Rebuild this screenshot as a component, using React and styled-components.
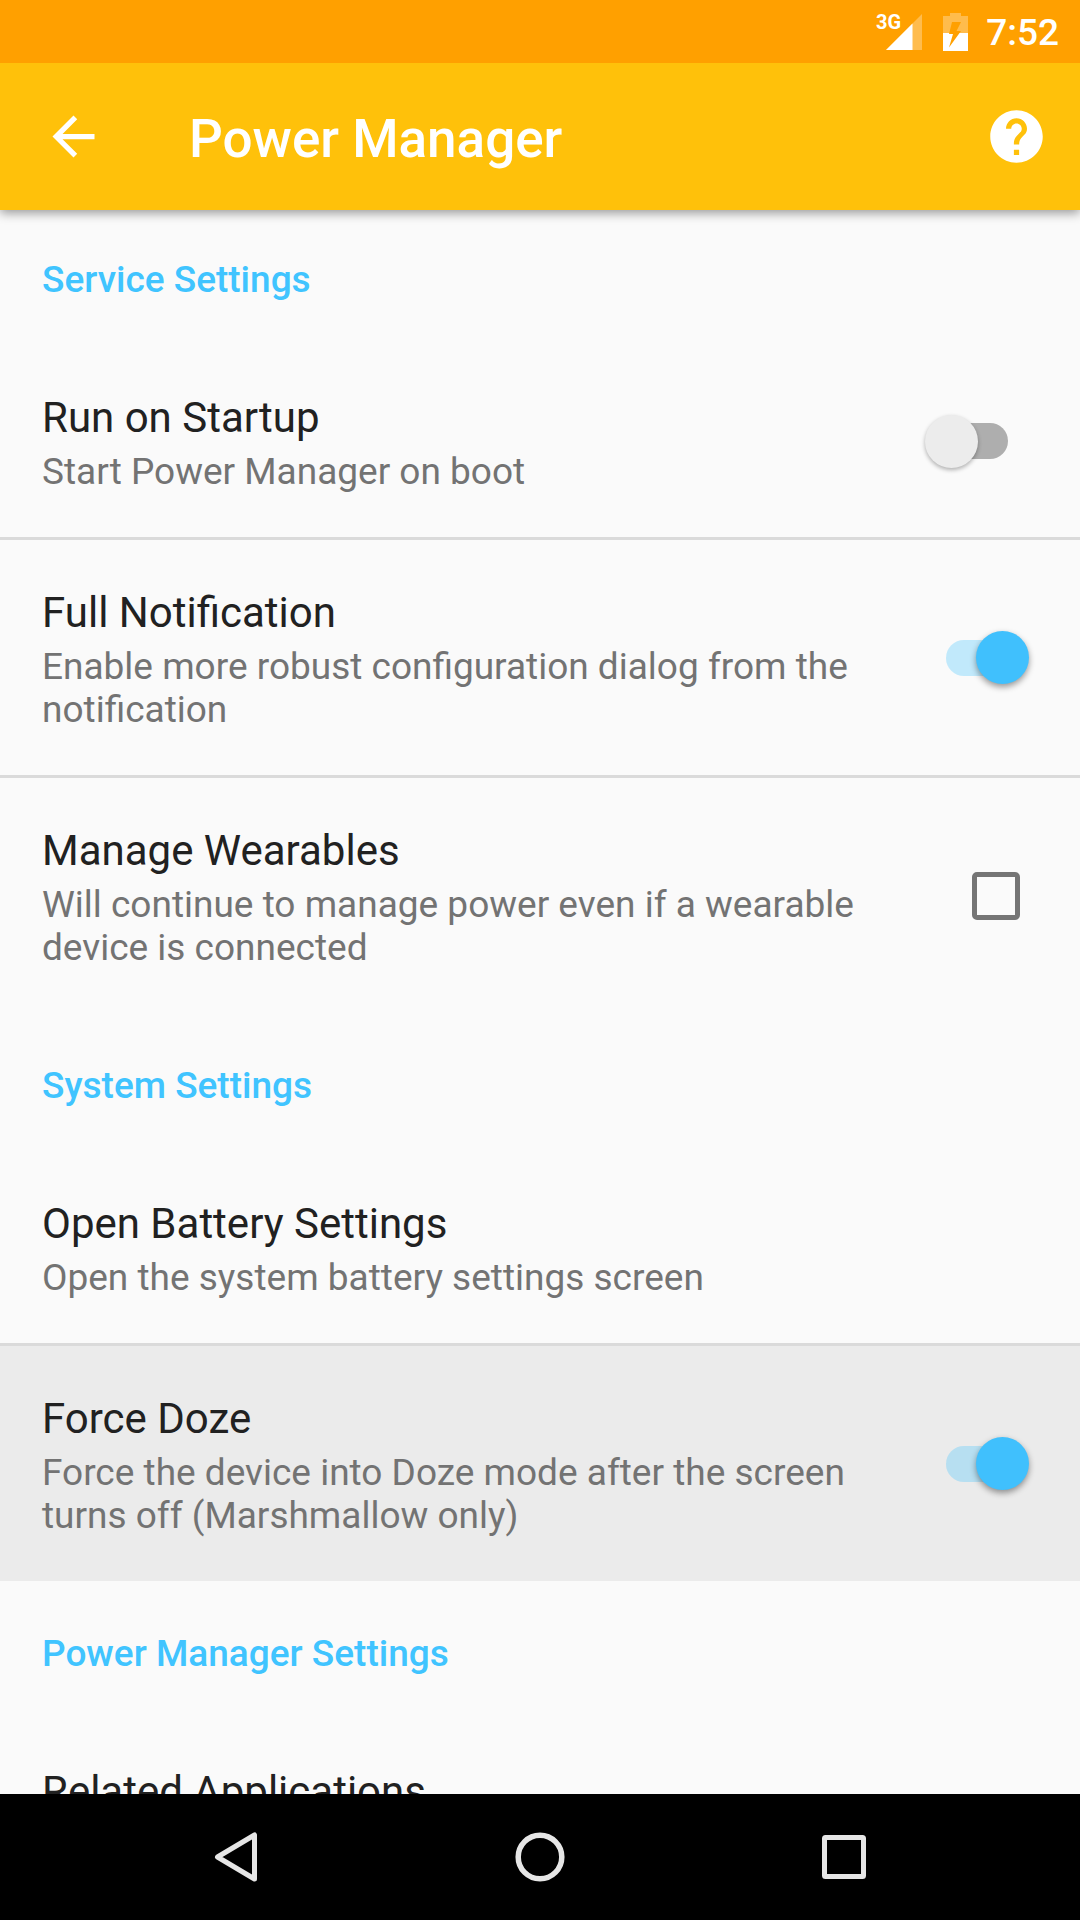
import React, { useState } from "react";
import styled, { createGlobalStyle } from "styled-components";

const GlobalStyle = createGlobalStyle`
  *, *::before, *::after { box-sizing: border-box; }
  body {
    margin: 0;
    background: #fafafa;
    font-family: Roboto, "Noto Sans", sans-serif;
  }
  button { font: inherit; color: inherit; border: 0; background: none; padding: 0; cursor: pointer; }
  svg { display: block; }
`;

const Screen = styled.div`
  display: flex;
  flex-direction: column;
  height: 100vh;
  overflow: hidden;
`;

const StatusBar = styled.div`
  display: flex;
  align-items: center;
  justify-content: flex-end;
  flex: none;
  height: 63px;
  padding: 0 21px;
  background: #ffa000;
  color: #fff;
  z-index: 2;
`;

const NetworkType = styled.span`
  margin-right: -16px;
  font-size: 20px;
  font-weight: 700;
  line-height: 18px;
`;

const Signal = styled.div`
  display: flex;
  height: 38px;
  margin-right: 20px;
`;

const Clock = styled.time`
  margin-left: 18px;
  font-size: 37px;
  font-weight: 500;
  line-height: 43px;
  padding-top: 2px;
`;

const Toolbar = styled.header`
  display: flex;
  align-items: center;
  flex: none;
  height: 147px;
  padding: 0 32px 0 42px;
  background: #ffc10a;
  color: #fff;
  box-shadow: 0 3px 10px rgba(0, 0, 0, 0.4);
  z-index: 1;
`;

const IconButton = styled.button`
  display: block;
  width: 63px;
  height: 63px;
`;

const AppTitle = styled.h1`
  flex: 1;
  margin: 0;
  padding: 4px 0 0 84px;
  font-size: 53px;
  font-weight: 500;
  line-height: 62px;
`;

const Content = styled.main`
  display: flex;
  flex-direction: column;
  flex: 1;
  min-height: 0;
  gap: 3px;
  overflow: hidden;
`;

const Section = styled.section`
  flex: none;
`;

const SectionTitle = styled.h2`
  margin: 0;
  padding: 48px 42px 44px;
  color: #40c4ff;
  font-size: 37px;
  font-weight: 500;
  line-height: 43px;
`;

const List = styled.ul`
  margin: 0;
  padding: 0;
  list-style: none;
`;

const Item = styled.li`
  & + & { border-top: 3px solid #dadada; }
`;

const Row = styled.label`
  display: flex;
  align-items: center;
  width: 100%;
  gap: 42px;
  padding: 48px 51px 44px 42px;
  background: ${(p) => (p.$pressed ? "#ebebeb" : "transparent")};
  text-align: left;
  cursor: pointer;
`;

const RowText = styled.span`
  display: flex;
  flex-direction: column;
  flex: 1;
  gap: 8px;
`;

const RowTitle = styled.span`
  color: #212121;
  font-size: 42px;
  line-height: 49px;
`;

const Summary = styled.span`
  color: #737373;
  font-size: 37px;
  line-height: 43px;
`;

/* The control is centred on the whole row, whose padding is 4px heavier on top. */
const Control = styled.span`
  display: flex;
  align-items: center;
  flex: none;
  margin-top: -4px;
`;

const Switch = styled.input`
  appearance: none;
  display: grid;
  align-items: center;
  width: 104px;
  height: 53px;
  margin: 0;
  cursor: pointer;

  &::before, &::after { content: ""; grid-area: 1 / 1; }
  &::before {
    justify-self: center;
    width: 62px;
    height: 36px;
    border-radius: 18px;
    background: #aeaeae;
  }
  &::after {
    justify-self: start;
    width: 53px;
    height: 53px;
    border-radius: 50%;
    background: #ececec;
    box-shadow: 0 2px 4px rgba(0, 0, 0, 0.3);
  }
  &:checked::before { background: rgba(64, 196, 255, 0.3); }
  &:checked::after {
    justify-self: end;
    background: #40c0fd;
    box-shadow: 0 3px 6px rgba(0, 0, 0, 0.4);
  }
`;

const Checkbox = styled.input`
  appearance: none;
  width: 48px;
  height: 48px;
  margin: 0 9px 0 0;
  border: 5px solid #757575;
  border-radius: 5px;
  cursor: pointer;

  &:checked { background: #40c0fd; border-color: #40c0fd; }
`;

const NavBar = styled.nav`
  display: flex;
  flex: none;
  height: 126px;
  padding: 0 84px;
  background: #000;
`;

const NavButton = styled.button`
  display: flex;
  align-items: center;
  justify-content: center;
  flex: 1;
`;

const sections = [
  {
    title: "Service Settings",
    items: [
      { id: "startup", title: "Run on Startup", summary: "Start Power Manager on boot", control: "switch" },
      { id: "notification", title: "Full Notification", summary: "Enable more robust configuration dialog from the notification", control: "switch", on: true },
      { id: "wearables", title: "Manage Wearables", summary: "Will continue to manage power even if a wearable device is connected", control: "checkbox" },
    ],
  },
  {
    title: "System Settings",
    items: [
      { id: "battery", title: "Open Battery Settings", summary: "Open the system battery settings screen" },
      { id: "doze", title: "Force Doze", summary: "Force the device into Doze mode after the screen turns off (Marshmallow only)", control: "switch", on: true, pressed: true },
    ],
  },
  {
    title: "Power Manager Settings",
    items: [{ id: "related", title: "Related Applications" }],
  },
];

function Preference({ id, title, summary, control, on = false, pressed }) {
  const [checked, setChecked] = useState(on);
  const toggle = (e) => setChecked(e.target.checked);
  const text = (
    <RowText>
      <RowTitle>{title}</RowTitle>
      {summary && <Summary>{summary}</Summary>}
    </RowText>
  );
  if (!control) {
    return <Item><Row as="button" type="button">{text}</Row></Item>;
  }
  return (
    <Item>
      <Row htmlFor={id} $pressed={pressed}>
        {text}
        <Control>
          {control === "switch"
            ? <Switch id={id} type="checkbox" role="switch" checked={checked} onChange={toggle} />
            : <Checkbox id={id} type="checkbox" checked={checked} onChange={toggle} />}
        </Control>
      </Row>
    </Item>
  );
}

export default function App() {
  return (
    <Screen>
      <GlobalStyle />
      <StatusBar>
        <Signal>
          <NetworkType>3G</NetworkType>
          <svg width="38" height="38" viewBox="0 0 38 38" fill="#fff" aria-hidden="true">
            <path d="M37 1V37H1Z" opacity=".3" />
            <path d="M27.500 10.500V37H1Z" />
          </svg>
        </Signal>
        <svg width="25" height="38" viewBox="0 0 25 38" fill="#fff" aria-hidden="true">
          <path d="M7 0H18V3H25V20H0V3H7Z" opacity=".3" />
          <path d="M0 20H25V38H0Z" />
          <path d="M9 9H18L13.500 18H18L6 34.500L10 21H6Z" fill="#ffa000" />
        </svg>
        <Clock>7:52</Clock>
      </StatusBar>
      <Toolbar>
        <IconButton type="button" aria-label="Back">
          <svg width="63" height="63" viewBox="0 0 24 24" fill="#fff">
            <path d="M20 11H7.830l5.590-5.590L12 4l-8 8 8 8 1.410-1.410L7.830 13H20v-2z" />
          </svg>
        </IconButton>
        <AppTitle>Power Manager</AppTitle>
        <IconButton type="button" aria-label="Help">
          <svg width="63" height="63" viewBox="0 0 24 24" fill="#fff">
            <path d="M12 2C6.480 2 2 6.480 2 12s4.480 10 10 10 10-4.480 10-10S17.520 2 12 2zm1 17h-2v-2h2v2zm2.070-7.750l-.9.920C13.450 12.900 13 13.500 13 15h-2v-.5c0-1.100.450-2.100 1.170-2.830l1.240-1.260c.370-.360.590-.860.590-1.410 0-1.100-.9-2-2-2s-2 .9-2 2H8c0-2.210 1.790-4 4-4s4 1.790 4 4c0 .880-.360 1.680-.930 2.250z" />
          </svg>
        </IconButton>
      </Toolbar>
      <Content>
        {sections.map((section) => (
          <Section key={section.title}>
            <SectionTitle>{section.title}</SectionTitle>
            <List>
              {section.items.map((item) => <Preference key={item.id} {...item} />)}
            </List>
          </Section>
        ))}
      </Content>
      <NavBar>
        <NavButton type="button" aria-label="Back">
          <svg width="44" height="50" viewBox="0 0 44 50" fill="none" stroke="#e6e6e6" strokeWidth="5" strokeLinejoin="round">
            <path d="M40.500 3V47L3.500 25Z" />
          </svg>
        </NavButton>
        <NavButton type="button" aria-label="Home">
          <svg width="50" height="50" viewBox="0 0 50 50" fill="none" stroke="#e6e6e6" strokeWidth="5.500">
            <circle cx="25" cy="25" r="21.800" />
          </svg>
        </NavButton>
        <NavButton type="button" aria-label="Overview">
          <svg width="44" height="44" viewBox="0 0 44 44" fill="none" stroke="#e6e6e6" strokeWidth="5" strokeLinejoin="round">
            <rect x="2.500" y="2.500" width="39" height="39" rx="1" />
          </svg>
        </NavButton>
      </NavBar>
    </Screen>
  );
}
